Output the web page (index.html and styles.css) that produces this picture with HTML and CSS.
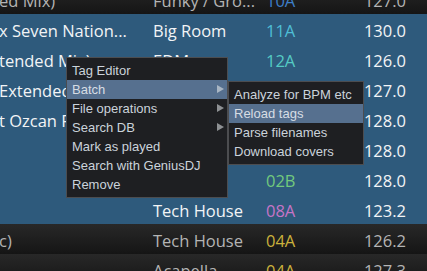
FILE: index.html
```html
<!DOCTYPE html>
<html lang="en">

<head>
    <meta charset="UTF-8">
    <title>Track list</title>
    <link rel="stylesheet" href="styles.css">
</head>

<body>

    <div class="tracks">
        <div class="row">
            <span class="title">ed Mix)</span>
            <span class="genre">Funky / Gro...</span>
            <span class="key k10a">10A</span>
            <span class="bpm">127.0</span>
        </div>
        <div class="row sel">
            <span class="title">x Seven Nation...</span>
            <span class="genre">Big Room</span>
            <span class="key k11a">11A</span>
            <span class="bpm">130.0</span>
        </div>
        <div class="row sel">
            <span class="title">tended Mix)</span>
            <span class="genre">EDM</span>
            <span class="key k12a">12A</span>
            <span class="bpm">126.0</span>
        </div>
        <div class="row sel">
            <span class="title">Extended Mix)</span>
            <span class="genre">Techno</span>
            <span class="key k12a">12A</span>
            <span class="bpm">127.0</span>
        </div>
        <div class="row sel">
            <span class="title">t Ozcan Remix</span>
            <span class="genre">House</span>
            <span class="key k11a">11A</span>
            <span class="bpm">128.0</span>
        </div>
        <div class="row sel">
            <span class="title"></span>
            <span class="genre">House</span>
            <span class="key k02b">02B</span>
            <span class="bpm">128.0</span>
        </div>
        <div class="row sel">
            <span class="title"></span>
            <span class="genre">House</span>
            <span class="key k02b">02B</span>
            <span class="bpm">128.0</span>
        </div>
        <div class="row sel">
            <span class="title"></span>
            <span class="genre">Tech House</span>
            <span class="key k08a">08A</span>
            <span class="bpm">123.2</span>
        </div>
        <div class="row">
            <span class="title">c)</span>
            <span class="genre">Tech House</span>
            <span class="key k04a">04A</span>
            <span class="bpm">126.2</span>
        </div>
        <div class="row">
            <span class="title"></span>
            <span class="genre">Acapella</span>
            <span class="key k04a">04A</span>
            <span class="bpm">127.3</span>
        </div>
    </div>

    <!-- context menu -->
    <div class="menu" id="ctx">
        <div class="item">Tag Editor</div>
        <div class="item active sub">Batch</div>
        <div class="item sub">File operations</div>
        <div class="item sub">Search DB</div>
        <div class="item">Mark as played</div>
        <div class="item">Search with GeniusDJ</div>
        <div class="item">Remove</div>
    </div>

    <div class="menu" id="batch">
        <div class="item">Analyze for BPM etc</div>
        <div class="item active">Reload tags</div>
        <div class="item">Parse filenames</div>
        <div class="item">Download covers</div>
    </div>

</body>

</html>
```

FILE: styles.css
```css
body {
    margin: 0;
    width: 427px;
    height: 271px;
    overflow: hidden;
    background-color: #161616;
    font-family: "Open Sans", "Noto Sans", sans-serif;
}

.tracks {
    margin-top: -16px;
}

.row {
    display: grid;
    grid-template-columns: 153px 113px 1fr auto;
    height: 30px;
    line-height: 33px;
    font-size: 16.5px;
    color: #b4b4b4;
    background: linear-gradient(#282828, #151515);
    overflow: hidden;
    white-space: nowrap;
}

.row.sel {
    background: #2e5a7c;
    color: #f2f4f6;
}

.title {
    overflow: hidden;
    margin-left: -1px;
}

.bpm {
    padding-right: 21px;
}

.k10a { color: #3d7fc8; }
.k11a { color: #4fbfd6; }
.k12a { color: #55cbc4; }
.k02b { color: #72c97c; }
.k08a { color: #c674c6; }
.k04a { color: #cbb23c; }

/* popup menus */

.menu {
    position: absolute;
    background-color: #1e1f22;
    border: 1px solid #4c4d50;
    padding: 3px 0;
    font-family: "Liberation Sans", Arial, sans-serif;
    font-size: 13px;
    color: #cbd3db;
}

#ctx {
    left: 66px;
    top: 57px;
    width: 160px;
}

#batch {
    left: 228px;
    top: 81px;
    width: 134px;
}

.item {
    height: 19px;
    line-height: 19px;
    padding-left: 5px;
    position: relative;
    white-space: nowrap;
}

.item.active {
    background-color: #56708f;
    color: #d6dde4;
}

.item.sub::after {
    content: "";
    position: absolute;
    right: 3px;
    top: 5px;
    border-left: 7px solid #8e9194;
    border-top: 4.5px solid transparent;
    border-bottom: 4.5px solid transparent;
}

.item.active.sub::after {
    border-left-color: #a9b6c4;
}
```
